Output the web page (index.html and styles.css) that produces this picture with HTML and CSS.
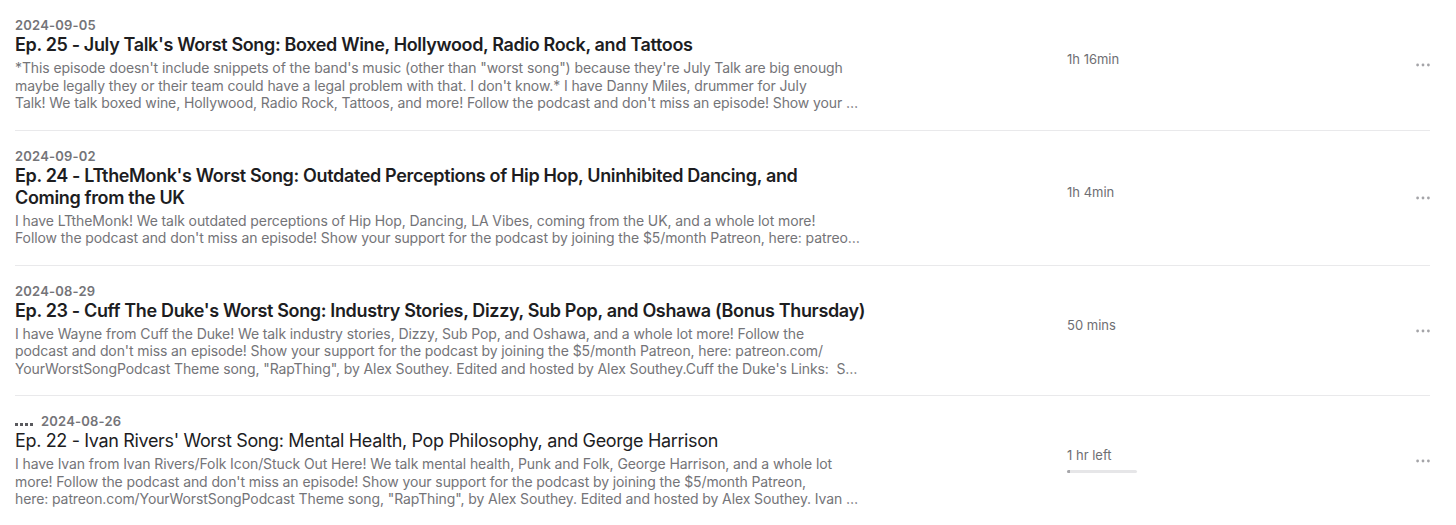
FILE: index.html
```html
<!DOCTYPE html>
<html lang="en">
<head>
    <meta charset="UTF-8">
    <meta name="viewport" content="width=device-width, initial-scale=1.0">
    <title>Your Worst Song - Episodes</title>
    <link rel="stylesheet" href="styles.css">
</head>
<body>
    <ul class="episode-list">
        <li class="episode">
            <div class="episode-info">
                <div class="episode-date">2024-09-05</div>
                <div class="episode-title">Ep. 25 - July Talk's Worst Song: Boxed Wine, Hollywood, Radio Rock, and Tattoos</div>
                <p class="episode-desc">*This episode doesn't include snippets of the band's music (other than "worst song") because they're July Talk are big enough maybe legally they or their team could have a legal problem with that. I don't know.* I have Danny Miles, drummer for July
                    <span class="desc-last">Talk! We talk boxed wine, Hollywood, Radio Rock, Tattoos, and more! Follow the podcast and don't miss an episode! Show your support for the podcast by joining the $5/month Patreon, here: patreon.com/YourWorstSongPodcast</span></p>
            </div>
            <div class="episode-time">
                <span class="duration">1h 16min</span>
                <div class="progress hidden"></div>
            </div>
            <button class="more-btn" aria-label="More">
                <svg width="14" height="4" viewBox="0 0 14 4"><circle cx="1.6" cy="2" r="1.4"/><circle cx="7" cy="2" r="1.4"/><circle cx="12.4" cy="2" r="1.4"/></svg>
            </button>
        </li>

        <li class="episode">
            <div class="episode-info">
                <div class="episode-date">2024-09-02</div>
                <div class="episode-title">Ep. 24 - LTtheMonk's Worst Song: Outdated Perceptions of Hip Hop, Uninhibited Dancing, and<br>Coming from the UK</div>
                <p class="episode-desc">I have LTtheMonk! We talk outdated perceptions of Hip Hop, Dancing, LA Vibes, coming from the UK, and a whole lot more!
                    <span class="desc-last">Follow the podcast and don't miss an episode! Show your support for the podcast by joining the $5/month Patreon, here: patreon.com/YourWorstSongPodcast Theme song</span></p>
            </div>
            <div class="episode-time">
                <span class="duration">1h 4min</span>
                <div class="progress hidden"></div>
            </div>
            <button class="more-btn" aria-label="More">
                <svg width="14" height="4" viewBox="0 0 14 4"><circle cx="1.6" cy="2" r="1.4"/><circle cx="7" cy="2" r="1.4"/><circle cx="12.4" cy="2" r="1.4"/></svg>
            </button>
        </li>

        <li class="episode">
            <div class="episode-info">
                <div class="episode-date">2024-08-29</div>
                <div class="episode-title">Ep. 23 - Cuff The Duke's Worst Song: Industry Stories, Dizzy, Sub Pop, and Oshawa (Bonus Thursday)</div>
                <p class="episode-desc">I have Wayne from Cuff the Duke! We talk industry stories, Dizzy, Sub Pop, and Oshawa, and a whole lot more! Follow the<br>podcast and don't miss an episode! Show your support for the podcast by joining the $5/month Patreon, here: patreon.com/
                    <span class="desc-last">YourWorstSongPodcast Theme song, "RapThing", by Alex Southey. Edited and hosted by Alex Southey.Cuff the Duke's Links:&nbsp; Spotify, Instagram, Facebook</span></p>
            </div>
            <div class="episode-time">
                <span class="duration">50 mins</span>
                <div class="progress hidden"></div>
            </div>
            <button class="more-btn" aria-label="More">
                <svg width="14" height="4" viewBox="0 0 14 4"><circle cx="1.6" cy="2" r="1.4"/><circle cx="7" cy="2" r="1.4"/><circle cx="12.4" cy="2" r="1.4"/></svg>
            </button>
        </li>

        <li class="episode">
            <div class="episode-info">
                <div class="episode-date">
                    <span class="now-playing"><i></i><i></i><i></i><i></i></span>
                    2024-08-26
                </div>
                <div class="episode-title played">Ep. 22 - Ivan Rivers' Worst Song: Mental Health, Pop Philosophy, and George Harrison</div>
                <p class="episode-desc">I have Ivan from Ivan Rivers/Folk Icon/Stuck Out Here! We talk mental health, Punk and Folk, George Harrison, and a whole lot more! Follow the podcast and don't miss an episode! Show your support for the podcast by joining the $5/month Patreon,
                    <span class="desc-last">here: patreon.com/YourWorstSongPodcast Theme song, "RapThing", by Alex Southey. Edited and hosted by Alex Southey. Ivan Rivers' Links: Spotify, Instagram</span></p>
            </div>
            <div class="episode-time">
                <span class="duration">1 hr left</span>
                <div class="progress"><div class="progress-fill" style="width: 4%"></div></div>
            </div>
            <button class="more-btn" aria-label="More">
                <svg width="14" height="4" viewBox="0 0 14 4"><circle cx="1.6" cy="2" r="1.4"/><circle cx="7" cy="2" r="1.4"/><circle cx="12.4" cy="2" r="1.4"/></svg>
            </button>
        </li>
    </ul>
</body>
</html>
```

FILE: styles.css
```css
* {
    margin: 0;
    padding: 0;
    box-sizing: border-box;
}

body {
    background: #ffffff;
    font-family: Inter, 'Noto Sans', 'Liberation Sans', sans-serif;
    color: #1d1d1f;
    overflow: hidden;
}

/* Lista de episódios */
.episode-list {
    list-style: none;
    padding: 0 26px 0 15px;
}

.episode {
    display: grid;
    grid-template-columns: 852px 200px 1fr auto;
    align-items: center;
    padding: 17px 0 18px;
    border-bottom: 1px solid #e9e9eb;
}

.episode-info {
    grid-column: 1;
}

.episode-date {
    display: flex;
    align-items: baseline;
    gap: 8px;
    font-size: 13px;
    line-height: 16px;
    font-weight: 600;
    color: #747478;
    letter-spacing: 0.2px;
}

.episode-title {
    margin-top: 1px;
    font-size: 18px;
    line-height: 22px;
    font-weight: 600;
    color: #1d1d1f;
    letter-spacing: -0.35px;
}

.episode-title.played {
    font-weight: 400;
}

.episode-desc {
    width: 846px;
    margin-top: 3px;
    font-size: 14px;
    line-height: 17.5px;
    color: #747478;
    letter-spacing: -0.1px;
}

/* Última linha cortada com reticências */
.desc-last {
    display: block;
    white-space: nowrap;
    overflow: hidden;
    text-overflow: ellipsis;
}

/* Indicador de reprodução */
.now-playing {
    display: flex;
    gap: 2px;
    align-self: flex-end;
    margin-bottom: 3px;
}

.now-playing i {
    width: 3px;
    height: 3px;
    background: #5a5a5e;
}

/* Duração e progresso */
.episode-time {
    grid-column: 3;
    display: flex;
    flex-direction: column;
    gap: 7px;
}

.duration {
    font-size: 13px;
    line-height: 16px;
    color: #6e6e73;
}

.progress {
    width: 70px;
    height: 3px;
    border-radius: 2px;
    background: #e6e6e8;
    overflow: hidden;
}

.progress.hidden {
    visibility: hidden;
}

.progress-fill {
    height: 100%;
    background: #a6a6aa;
}

/* Botão de mais opções */
.more-btn {
    grid-column: 4;
    margin-top: 2px;
    border: none;
    background: none;
    display: flex;
    padding: 0;
    cursor: pointer;
}

.more-btn svg {
    fill: #a4a4a8;
}
```
